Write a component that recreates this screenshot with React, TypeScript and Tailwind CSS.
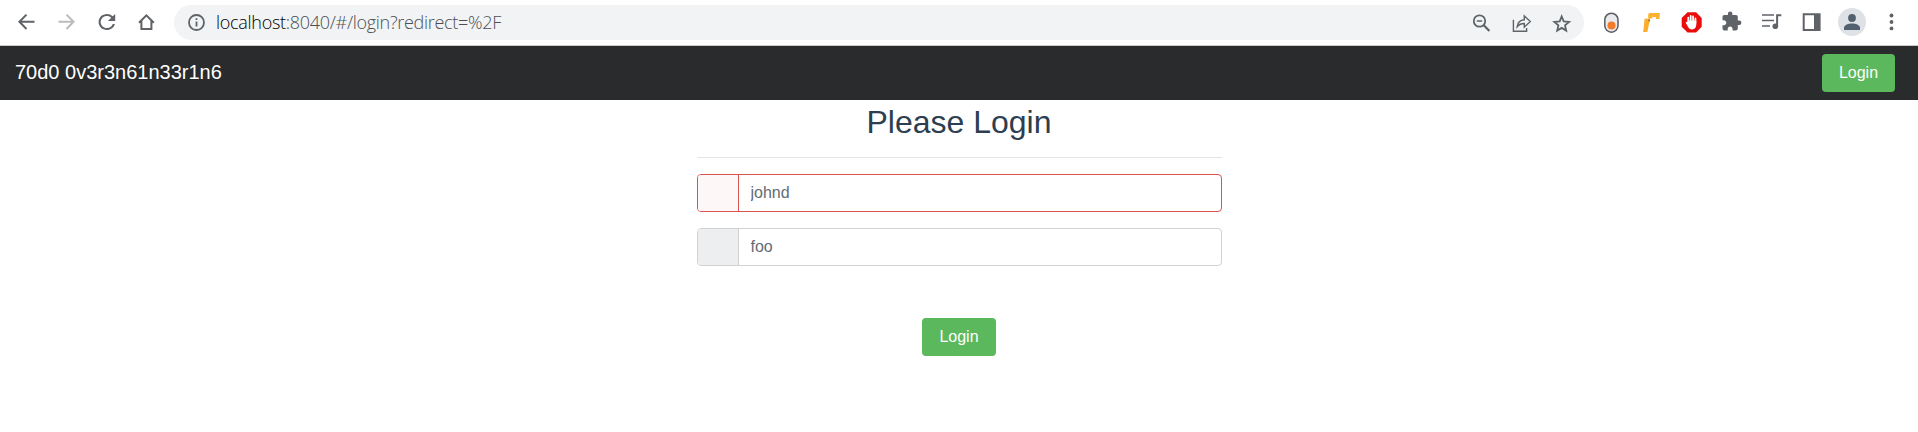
import type { ReactNode } from "react";

function Glyph({ children, color = "text-[#5f6368]" }: { children: ReactNode; color?: string }) {
  return (
    <span className={`flex h-11 w-10 shrink-0 items-center justify-center ${color}`}>
      <svg width="24" height="24" viewBox="0 0 24 24" fill="none" stroke="currentColor" strokeWidth="2">
        {children}
      </svg>
    </span>
  );
}

function Toolbar() {
  return (
    <header className="flex h-[46px] items-start border-b border-[#c9cacc] bg-white">
      <div className="flex w-[174px] shrink-0 pl-1.5">
        <Glyph>
          <path d="M20.5 11.8H6M12.5 4.6 5.4 11.8l7.1 7.2" />
        </Glyph>
        <Glyph color="text-[#babcbe]">
          <path d="M4.5 11.8H19M12.5 4.6l7.1 7.2-7.1 7.2" />
        </Glyph>
        <Glyph>
          <path
            transform="translate(.4 0) scale(1.04 1)"
            fill="currentColor"
            stroke="none"
            d="M17.65 6.35A7.958 7.958 0 0 0 12 4c-4.42 0-7.99 3.58-7.99 8s3.57 8 7.99 8c3.73 0 6.84-2.55 7.73-6h-2.08A5.99 5.99 0 0 1 12 18c-3.31 0-6-2.69-6-6s2.69-6 6-6c1.66 0 3.14.69 4.22 1.78L13 11h7V4l-2.35 2.35z"
          />
        </Glyph>
        <Glyph>
          <path d="m5 12.8 7.4-7.4 7.4 7.4M7.4 11v8.1h10V11" />
        </Glyph>
      </div>
      <div className="mt-[5px] flex h-[35px] w-[1410px] items-center rounded-full bg-[#f1f3f4] pr-0.5 pl-[14px]">
        <svg width="17" height="17" viewBox="0 0 17 17" fill="none" stroke="#5f6368" strokeWidth="1.8">
          <circle cx="8.5" cy="8.5" r="7.5" />
          <path d="M8.5 7.5v5M8.5 4.2v1.8" />
        </svg>
        <div className="ml-[11px] flex-1 pb-0.5 font-['Open_Sans','Noto_Sans',sans-serif] text-[18px] leading-6 font-light tracking-[-0.29px] text-[#4b4f53]">
          <span className="text-black">localhost</span>:8040/#/login?redirect=%2F
        </div>
        <Glyph>
          <circle cx="9.5" cy="10" r="5.7" strokeWidth="1.8" />
          <path d="m13.8 14.3 5.6 5.7" strokeWidth="2.2" />
          <path d="M6.8 10h5.4" strokeWidth="1.5" />
        </Glyph>
        <Glyph>
          <path
            strokeWidth="1.4"
            d="M3.4 8.7v11.6h13.2v-3.4M7.2 15.700c.5-4.300 2.900-6.500 7.100-6.900V4.900l6 5.700-6 5.500v-3.600c-3 0-5.200.8-7.100 3.200Z"
          />
        </Glyph>
        <Glyph>
          <path
            strokeWidth="1.8"
            d="m11.700 5.500 2 4.900 5.400.5-4.100 3.500 1.200 5.200-4.500-2.700-4.500 2.700 1.200-5.200-4.100-3.500 5.400-.5Z"
          />
        </Glyph>
      </div>
      <div className="flex pl-2">
        <Glyph>
          <rect x="4.800" y="3.200" width="13.200" height="19" rx="6.600" fill="#e8eaed" stroke="#5a5d61" strokeWidth="1.500" />
          <circle cx="11.500" cy="15.500" r="4" fill="#f47b2a" stroke="none" />
        </Glyph>
        <Glyph>
          <path d="M9.300 3.100H19.900l-.4 6h-3.700V7H9.600Z" fill="#fdb22f" stroke="none" />
          <path d="m4.600 8.700 5.600-.2L7.300 22H3.200Z" fill="#fbad2c" stroke="none" />
          <path d="M8.200 4.200 9.400 3.100h2.900v5.400H8.200Z" fill="#fdb22f" stroke="none" />
          <path d="m8.600 9.300 1.500 1-1.300 1.600Z" fill="#765421" stroke="none" />
        </Glyph>
        <Glyph>
          <path d="M7.500 2.300h8.600l5.600 5.800v8.600l-5.600 5.800H7.500l-5.800-5.800V8.100Z" fill="#ea0b0b" stroke="none" />
          <path d="M8.300 12.500V7.700M10.700 11V6M13.100 11V6.500M15.400 13V8.500" stroke="#fff" strokeWidth="1.800" strokeLinecap="round" />
          <path d="M7.400 10.500h8.900v4c0 2.900-1.600 4.900-4.100 4.900-2.200 0-3.400-1-4.400-2.900L5.600 12.400c.7-.8 1.400-.5 1.800.1Z" fill="#fff" stroke="none" />
        </Glyph>
        <Glyph>
          <path
            transform="translate(.7 .6) scale(.9)"
            fill="currentColor"
            stroke="none"
            d="M20.500 11H19V7c0-1.100-.9-2-2-2h-4V3.500a2.500 2.500 0 0 0-5 0V5H4c-1.100 0-1.990.9-1.990 2v3.800H3.500c1.490 0 2.700 1.210 2.700 2.700s-1.210 2.700-2.700 2.700H2V20c0 1.100.9 2 2 2h3.800v-1.500c0-1.490 1.210-2.700 2.700-2.700s2.700 1.210 2.700 2.700V22H17c1.100 0 2-.9 2-2v-4h1.500a2.500 2.500 0 0 0 0-5z"
          />
        </Glyph>
        <Glyph>
          <path d="M2 5h12M2 10.500h12M2 16h8" strokeWidth="1.600" />
          <path d="M21.300 5.300h-4.200v11" />
          <circle cx="15.300" cy="16.200" r="2.800" fill="currentColor" stroke="none" />
        </Glyph>
        <Glyph>
          <path d="M2.700 3.200h17.900V21H2.700Zm2 2v13.700H14V5.200Z" fillRule="evenodd" fill="currentColor" stroke="none" />
        </Glyph>
        <span className="mt-2 flex h-7 w-10 justify-center">
          <svg width="28" height="28" viewBox="0 0 28 28">
            <circle cx="14" cy="14" r="14" fill="#dee1e6" />
            <circle cx="14" cy="10" r="3.900" fill="#52606f" />
            <path d="M6 22v-2.100c0-2.900 4.500-4.300 8-4.300s8 1.400 8 4.300V22Z" fill="#52606f" />
          </svg>
        </span>
        <Glyph>
          <g fill="currentColor" stroke="none">
            <circle cx="11.500" cy="5.500" r="1.900" />
            <circle cx="11.500" cy="12" r="1.900" />
            <circle cx="11.500" cy="18.400" r="1.900" />
          </g>
        </Glyph>
      </div>
    </header>
  );
}

export default function App() {
  return (
    <div className="h-[432px] overflow-hidden bg-white font-['Liberation_Sans',Arial,sans-serif] text-base text-[#2c3e50]">
      <Toolbar />
      <nav className="flex h-[54px] items-center justify-between bg-[#292b2c] pr-[23px] pl-[15px]">
        <span className="pb-0.5 text-xl text-white">70d0 0v3r3n61n33r1n6</span>
        <button className="h-[38px] w-[73px] rounded bg-[#5cb85c] text-white">Login</button>
      </nav>
      <main className="mx-auto flex w-[525px] flex-col items-center">
        <h2 className="pt-[3px] text-[32px] leading-[38px]">Please Login</h2>
        <hr className="mt-4 w-full border-t border-[#e3e4e5]" />
        <div className="mt-4 flex h-[38px] w-full overflow-hidden rounded border border-[#d9534f]">
          <span className="w-10 bg-[#fdf7f7]" />
          <input
            className="min-w-0 flex-1 border-l border-[#d9534f] px-3 placeholder:text-[#636c72] focus:outline-none"
            placeholder="johnd"
          />
        </div>
        <div className="mt-4 flex h-[38px] w-full overflow-hidden rounded border border-[#d1d2d3]">
          <span className="w-10 bg-[#eceeef]" />
          <input
            className="min-w-0 flex-1 border-l border-[#d1d2d3] px-3 placeholder:text-[#636c72] focus:outline-none"
            placeholder="foo"
          />
        </div>
        <button className="mt-[52px] h-[38px] w-[74px] rounded bg-[#5cb85c] text-white">Login</button>
      </main>
    </div>
  );
}
